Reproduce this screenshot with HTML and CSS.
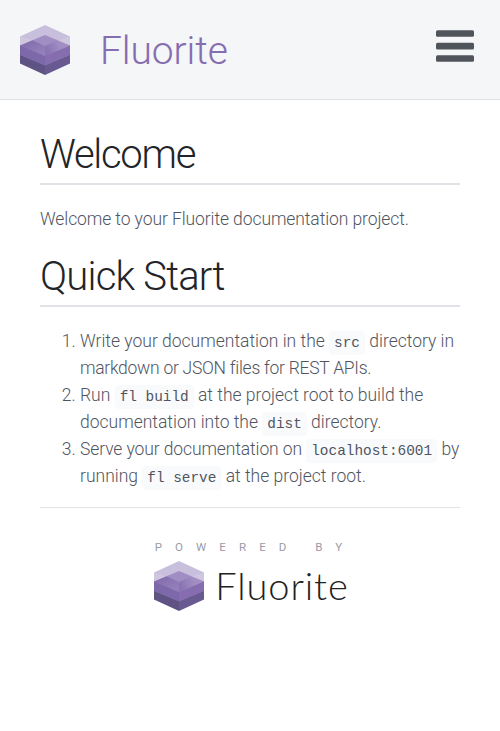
FILE: index.html
```
<!DOCTYPE html>
<html lang="en">
<head>
<meta charset="utf-8">
<title>Fluorite</title>
<link rel="stylesheet" href="styles.css">
</head>
<body>
<svg class="defs" width="0" height="0" aria-hidden="true">
  <defs>
    <linearGradient id="inner-left" gradientUnits="userSpaceOnUse" x1="20" y1="28" x2="14" y2="15"><stop offset="0" stop-color="#937fba"/><stop offset="1" stop-color="#866fae"/></linearGradient>
    <linearGradient id="inner-right" gradientUnits="userSpaceOnUse" x1="26" y1="24" x2="40" y2="19"><stop offset="0" stop-color="#8a73b2"/><stop offset="1" stop-color="#a18fc4"/></linearGradient>
    <symbol id="logo" viewBox="0 0 50 50">
      <path fill="#c8bfdc" d="M25 0l25 11.500V21L25 31 0 21v-9.500z"/>
      <path fill="#cfc6e0" d="M0 11.500l13 4L0 21zM50 11.500l-13 4 13 5.500z"/>
      <path fill="#5f5383" d="M0 29.500l25 10.500v10L0 38.500z"/>
      <path fill="#685990" d="M50 29.500L25 40v10l25-11.500z"/>
      <path fill="#7d69a9" d="M0 20l25 10.500V40.500L0 30z"/>
      <path fill="#866db0" d="M50 20L25 30.500V40.500L50 30z"/>
      <path fill="url(#inner-left)" d="M0 20.500L13 15l12 5.500v10.500z"/>
      <path fill="url(#inner-right)" d="M50 20.500L37 15l-12 5.500v10.500z"/>
      <path fill="#a08dc3" d="M25 10l12.500 5.200L25 21l-12.500-5.800z"/>
    </symbol>
  </defs>
</svg>
<header class="topbar">
  <a class="brand"><svg class="logo"><use href="#logo"/></svg><span class="brand-name">Fluorite</span></a>
  <svg class="menu" viewBox="0 0 38 33"><g fill="#50555c"><rect y="0.200" width="38" height="6.600" rx="1.500"/><rect y="12.800" width="38" height="6.600" rx="1.500"/><rect y="25.200" width="38" height="6.600" rx="1.500"/></g></svg>
</header>
<main class="content">
  <h1 class="heading welcome">Welcome</h1>
  <p class="intro">Welcome to your Fluorite documentation project.</p>
  <h1 class="heading quick">Quick Start</h1>
  <ol class="steps">
    <li>Write your documentation in the <code>src</code> directory in<br><span class="tight">markdown or JSON files for REST APIs.</span></li>
    <li>Run <code>fl build</code> at the project root to build the<br>documentation into the <code>dist</code> directory.</li>
    <li><span class="snug">Serve your documentation on</span> <code>localhost:6001</code> by<br>running <code>fl serve</code> at the project root.</li>
  </ol>
  <footer class="footer">
    <div class="powered">POWERED BY</div>
    <div class="footer-brand"><svg class="logo"><use href="#logo"/></svg><span class="footer-name">Fluorite</span></div>
  </footer>
</main>
</body>
</html>
```
FILE: styles.css
```
* { box-sizing: border-box; }
body {
  margin: 0;
  background: #fff;
  color: #50555f;
  font: 300 17.5px/27px Roboto, "Liberation Sans", sans-serif;
}
.defs { display: block; }
.logo { width: 50px; height: 50px; flex: none; display: block; }
.topbar {
  height: 100px;
  padding: 0 26px 0 20px;
  display: flex;
  align-items: center;
  justify-content: space-between;
  background: #f4f6f8;
  border-bottom: 1px solid #dfe1e5;
}
.brand { display: flex; align-items: center; gap: 30px; }
.brand-name {
  color: #866db0;
  font-size: 39px;
  line-height: 50px;
  letter-spacing: -0.1px;
  padding-top: 2px;
}
.menu { width: 38px; height: 33px; margin-bottom: 7px; }
.content { padding: 27px 40px 0; }
.heading {
  margin: 0;
  height: 58px;
  color: #222428;
  font-size: 40px;
  font-weight: 300;
  line-height: 56px;
  border-bottom: 2px solid #e1e1e8;
}
.welcome { letter-spacing: -1.3px; }
.quick { letter-spacing: -0.8px; }
.intro { margin: 21px 0 16px; letter-spacing: -0.09px; }
.steps { margin: 21px 0 17px; padding-left: 40px; white-space: nowrap; }
.tight { letter-spacing: -0.27px; }
.snug { letter-spacing: -0.11px; }
code {
  font: 400 14.4px/24px "Liberation Mono", monospace;
  padding: 4px 5px;
  background: #f9fafc;
  border-radius: 4px;
}
.footer {
  border-top: 1px solid #e1e3e5;
  padding-top: 31px;
  display: flex;
  flex-direction: column;
  align-items: center;
}
.powered {
  color: #989ca8;
  font-size: 11.5px;
  font-weight: 400;
  line-height: 16px;
  letter-spacing: 13.1px;
  margin-right: -10px;
  white-space: nowrap;
}
.footer-brand { display: flex; align-items: center; gap: 11px; margin: 6px 0 0 3px; }
.footer-name {
  color: #222;
  font: 300 38px/48px Lato, sans-serif;
  letter-spacing: 0.9px;
  padding-bottom: 2px;
}
```
